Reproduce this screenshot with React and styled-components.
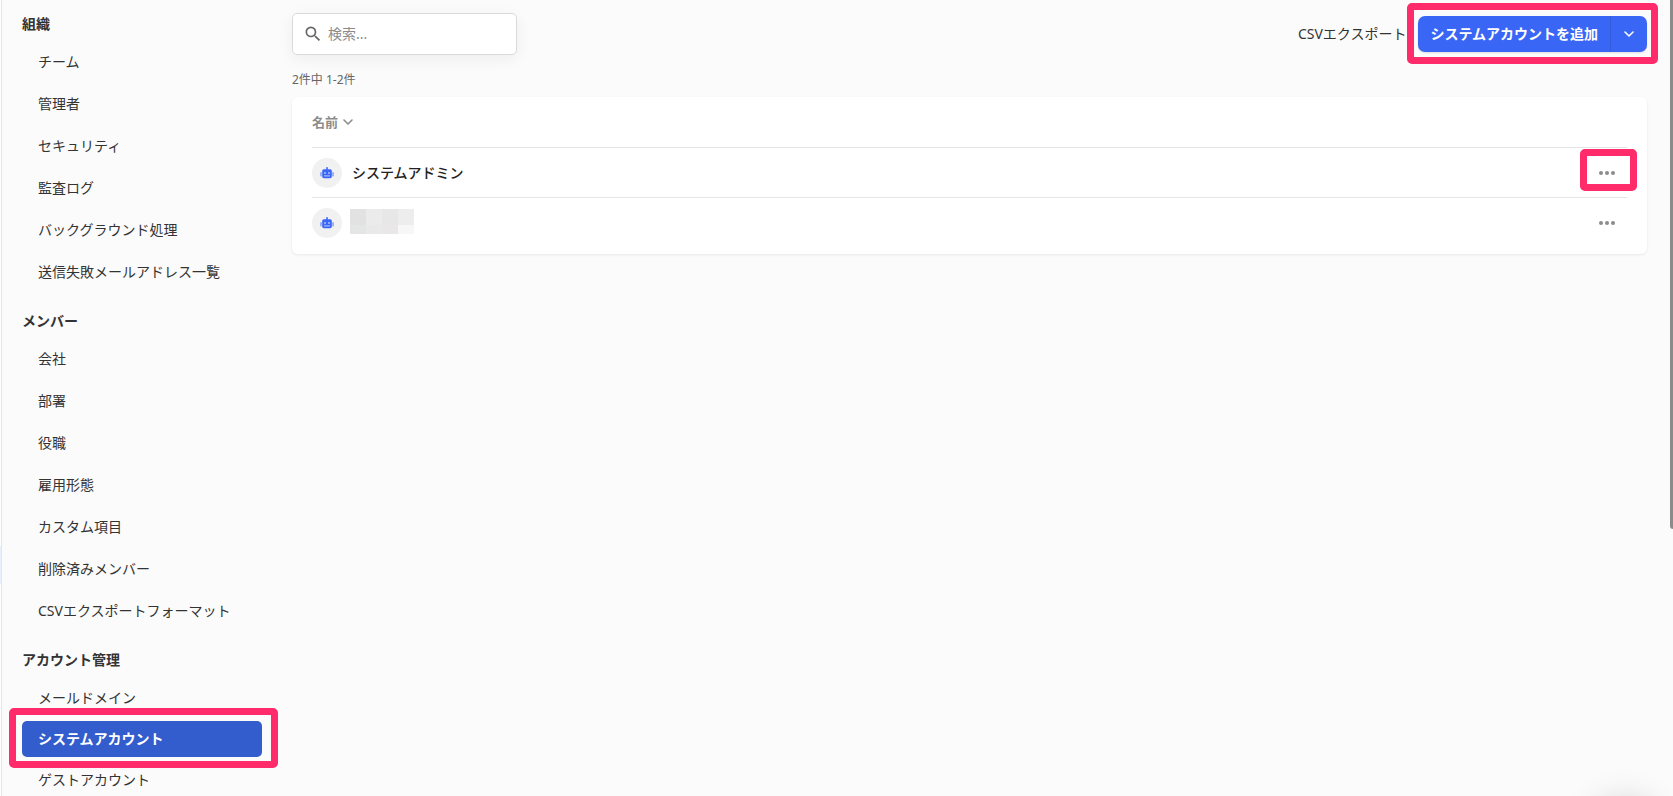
import styled, { createGlobalStyle } from 'styled-components';
import { MdSearch } from 'react-icons/md';

const GlobalStyle = createGlobalStyle`
  * {
    box-sizing: border-box;
  }
  body {
    margin: 0;
    overflow: hidden;
    background-color: #fbfbfb;
    color: #333;
    font-family: 'Noto Sans', 'Noto Sans CJK JP', sans-serif;
    font-size: 14px;
    line-height: 20px;
  }
  button, input {
    font: inherit;
    color: inherit;
  }
`;

const Page = styled.div`
  display: flex;
  height: 100vh;
`;

const Rail = styled.div`
  flex: none;
  display: flex;
  flex-direction: column;
  width: 2px;
  padding-top: 546px;
  background-color: #fff;
  border-right: 1px solid #e6e6e6;
`;

const RailMark = styled.span`
  height: 38px;
  background-color: #e8effd;
`;

const Sidebar = styled.nav`
  flex: none;
  width: 290px;
  padding: 14px 30px 0 20px;
`;

const Group = styled.section`
  margin-bottom: 18px;
`;

const GroupTitle = styled.h2`
  margin: 0 0 7px;
  font-size: 14px;
  line-height: 20px;
  font-weight: 700;
`;

const List = styled.ul`
  margin: 0;
  padding: 0;
  list-style: none;
`;

const Item = styled.li`
  padding: ${({ $active }) => ($active ? '2px 0' : '3px 0')};
`;

const ItemLink = styled.a`
  display: block;
  padding: 0 16px;
  line-height: 36px;
  border-radius: 5px;
  text-decoration: none;
  white-space: nowrap;
  color: ${({ $active }) => ($active ? '#fff' : '#333')};
  background-color: ${({ $active }) => ($active ? '#335ccc' : 'transparent')};
  font-weight: ${({ $active }) => ($active ? 700 : 400)};
`;

const Highlight = styled.div`
  position: relative;

  &::after {
    content: '';
    position: absolute;
    inset: ${({ $inset }) => $inset};
    border: 7px solid #ff2b6a;
    border-radius: 5px;
    pointer-events: none;
  }
`;

const Main = styled.main`
  flex: 1;
  min-width: 0;
  padding: 13px 26px 0 0;
`;

const Toolbar = styled.div`
  display: flex;
  justify-content: space-between;
  align-items: center;
`;

const SearchBox = styled.label`
  display: flex;
  align-items: center;
  gap: 5px;
  width: 225px;
  height: 42px;
  padding: 0 10px;
  background-color: #fff;
  border: 1px solid #dadada;
  border-radius: 5px;
  box-shadow: 0 4px 16px rgba(0, 0, 0, 0.06);

  svg {
    flex: none;
    color: #666;
  }
`;

const SearchInput = styled.input`
  flex: 1;
  min-width: 0;
  padding: 0;
  border: none;
  outline: none;
  background: none;

  &::placeholder {
    color: #8c8c8c;
    opacity: 1;
  }
`;

const Actions = styled.div`
  display: flex;
  align-items: center;
  gap: 12px;
`;

const TextButton = styled.button`
  padding: 0;
  border: none;
  background: none;
  cursor: pointer;
`;

const SplitButton = styled.div`
  display: flex;
  height: 36px;
  overflow: hidden;
  color: #fff;
  background-color: #3a66f6;
  border-radius: 7px;
  box-shadow: 0 1px 2px rgba(0, 0, 0, 0.12);
`;

const AddButton = styled.button`
  padding: 0 12px;
  border: none;
  border-right: 1px solid #345cdd;
  background: none;
  font-weight: 700;
  cursor: pointer;
`;

const ToggleButton = styled.button`
  display: flex;
  align-items: center;
  justify-content: center;
  width: 36px;
  padding: 0;
  border: none;
  background: none;
  cursor: pointer;
`;

const Count = styled.p`
  margin: 15px 0 7px;
  font-size: 12px;
  color: #666;
`;

const Card = styled.div`
  padding: 0 20px 7px;
  background-color: #fff;
  border-radius: 6px;
  box-shadow: 0 1px 3px rgba(0, 0, 0, 0.08);
`;

const Table = styled.table`
  width: 100%;
  border-collapse: collapse;

  th, td {
    height: 50px;
    padding: 0;
    text-align: left;
  }
  td {
    padding-top: 2px;
  }
  tbody tr {
    border-top: 1px solid #e5e5e5;
  }
`;

const SortButton = styled.button`
  display: flex;
  align-items: center;
  gap: 5px;
  padding: 0;
  border: none;
  background: none;
  font-size: 13px;
  font-weight: 700;
  color: #8c8c8c;
  cursor: pointer;
`;

const Account = styled.div`
  display: flex;
  align-items: center;
  gap: ${({ $masked }) => ($masked ? '8px' : '10px')};
  font-weight: 500;
  color: #222;
`;

const Avatar = styled.span`
  display: flex;
  align-items: center;
  justify-content: center;
  width: 30px;
  height: 30px;
  border-radius: 50%;
  background-color: #f1f1f1;
  color: #3a66f6;
`;

const Mosaic = styled.span`
  display: grid;
  grid-template-columns: repeat(4, 16px);
  grid-template-rows: 16px 9px;
  margin-bottom: 4px;
`;

const Cell = styled.span`
  background-color: ${({ $color }) => $color};
`;

const MenuCell = styled.td`
  width: 40px;
`;

const MenuButton = styled.button`
  display: flex;
  align-items: center;
  justify-content: center;
  width: 40px;
  height: 30px;
  padding: 0;
  border: none;
  background: none;
  color: #8c8c8c;
  cursor: pointer;
`;

const ScrollThumb = styled.div`
  position: fixed;
  top: 0;
  right: 0;
  width: 3px;
  height: 529px;
  background-color: #8b8b8b;
  border-bottom-left-radius: 3px;
`;

const HelpBubble = styled.div`
  position: fixed;
  right: 18px;
  bottom: -66px;
  width: 60px;
  height: 60px;
  border-radius: 50%;
  box-shadow: 0 0 36px rgba(0, 0, 0, 0.2);
`;

const groups = [
  {
    title: '組織',
    items: ['チーム', '管理者', 'セキュリティ', '監査ログ', 'バックグラウンド処理', '送信失敗メールアドレス一覧'],
  },
  {
    title: 'メンバー',
    items: ['会社', '部署', '役職', '雇用形態', 'カスタム項目', '削除済みメンバー', 'CSVエクスポートフォーマット'],
  },
  {
    title: 'アカウント管理',
    items: ['メールドメイン', 'システムアカウント', 'ゲストアカウント'],
  },
];

const current = 'システムアカウント';

const mosaic = ['#e2e2e2', '#ebebeb', '#e8e7e7', '#ededed', '#e3e6e5', '#e9e9e9', '#e9e7e8', '#f7f7f7'];

function Chevron() {
  return (
    <svg width="10" height="6" viewBox="0 0 10 6" fill="none" stroke="currentColor" strokeWidth="1.6" strokeLinecap="round" strokeLinejoin="round">
      <path d="M1 1l4 4 4-4" />
    </svg>
  );
}

function Robot() {
  return (
    <svg width="14" height="12" viewBox="0 0 14 12" fill="currentColor">
      <rect x="6.2" y="0" width="1.6" height="3" rx="0.8" />
      <rect x="2.2" y="2.2" width="9.6" height="9" rx="1.6" />
      <rect x="0.3" y="5" width="1.4" height="4.4" rx="0.7" opacity="0.65" />
      <rect x="12.3" y="5" width="1.4" height="4.4" rx="0.7" opacity="0.65" />
      <g fill="#b9c8fb">
        <circle cx="5" cy="6" r="0.9" />
        <circle cx="9" cy="6" r="0.9" />
        <rect x="4" y="8.4" width="6" height="1" />
      </g>
    </svg>
  );
}

function RowMenu() {
  return (
    <MenuButton type="button" aria-label="メニュー">
      <svg width="16" height="4" viewBox="0 0 16 4" fill="currentColor">
        <circle cx="2" cy="2" r="2" />
        <circle cx="8" cy="2" r="2" />
        <circle cx="14" cy="2" r="2" />
      </svg>
    </MenuButton>
  );
}

function NavItem({ label }) {
  if (label !== current) {
    return <Item><ItemLink href="#">{label}</ItemLink></Item>;
  }
  return (
    <Item $active>
      <Highlight $inset="-13px -16px -11px -13px">
        <ItemLink href="#" $active aria-current="page">{label}</ItemLink>
      </Highlight>
    </Item>
  );
}

function App() {
  return (
    <Page>
      <GlobalStyle />
      <Rail><RailMark /></Rail>
      <Sidebar>
        {groups.map((group) => (
          <Group key={group.title}>
            <GroupTitle>{group.title}</GroupTitle>
            <List>
              {group.items.map((label) => <NavItem key={label} label={label} />)}
            </List>
          </Group>
        ))}
      </Sidebar>
      <Main>
        <Toolbar>
          <SearchBox>
            <MdSearch size={20} />
            <SearchInput type="text" placeholder="検索..." aria-label="検索" />
          </SearchBox>
          <Actions>
            <TextButton type="button">CSVエクスポート</TextButton>
            <Highlight $inset="-13px -11px -12px">
              <SplitButton>
                <AddButton type="button">システムアカウントを追加</AddButton>
                <ToggleButton type="button" aria-label="その他の操作"><Chevron /></ToggleButton>
              </SplitButton>
            </Highlight>
          </Actions>
        </Toolbar>
        <Count>2件中 1-2件</Count>
        <Card>
          <Table>
            <thead>
              <tr>
                <th colSpan={2}>
                  <SortButton type="button">名前 <Chevron /></SortButton>
                </th>
              </tr>
            </thead>
            <tbody>
              <tr>
                <td>
                  <Account>
                    <Avatar><Robot /></Avatar>
                    システムアドミン
                  </Account>
                </td>
                <MenuCell>
                  <Highlight $inset="-9px -10px -3px -7px"><RowMenu /></Highlight>
                </MenuCell>
              </tr>
              <tr>
                <td>
                  <Account $masked>
                    <Avatar><Robot /></Avatar>
                    <Mosaic>
                      {mosaic.map((color) => <Cell key={color} $color={color} />)}
                    </Mosaic>
                  </Account>
                </td>
                <MenuCell><RowMenu /></MenuCell>
              </tr>
            </tbody>
          </Table>
        </Card>
      </Main>
      <HelpBubble />
      <ScrollThumb />
    </Page>
  );
}

export default App;
